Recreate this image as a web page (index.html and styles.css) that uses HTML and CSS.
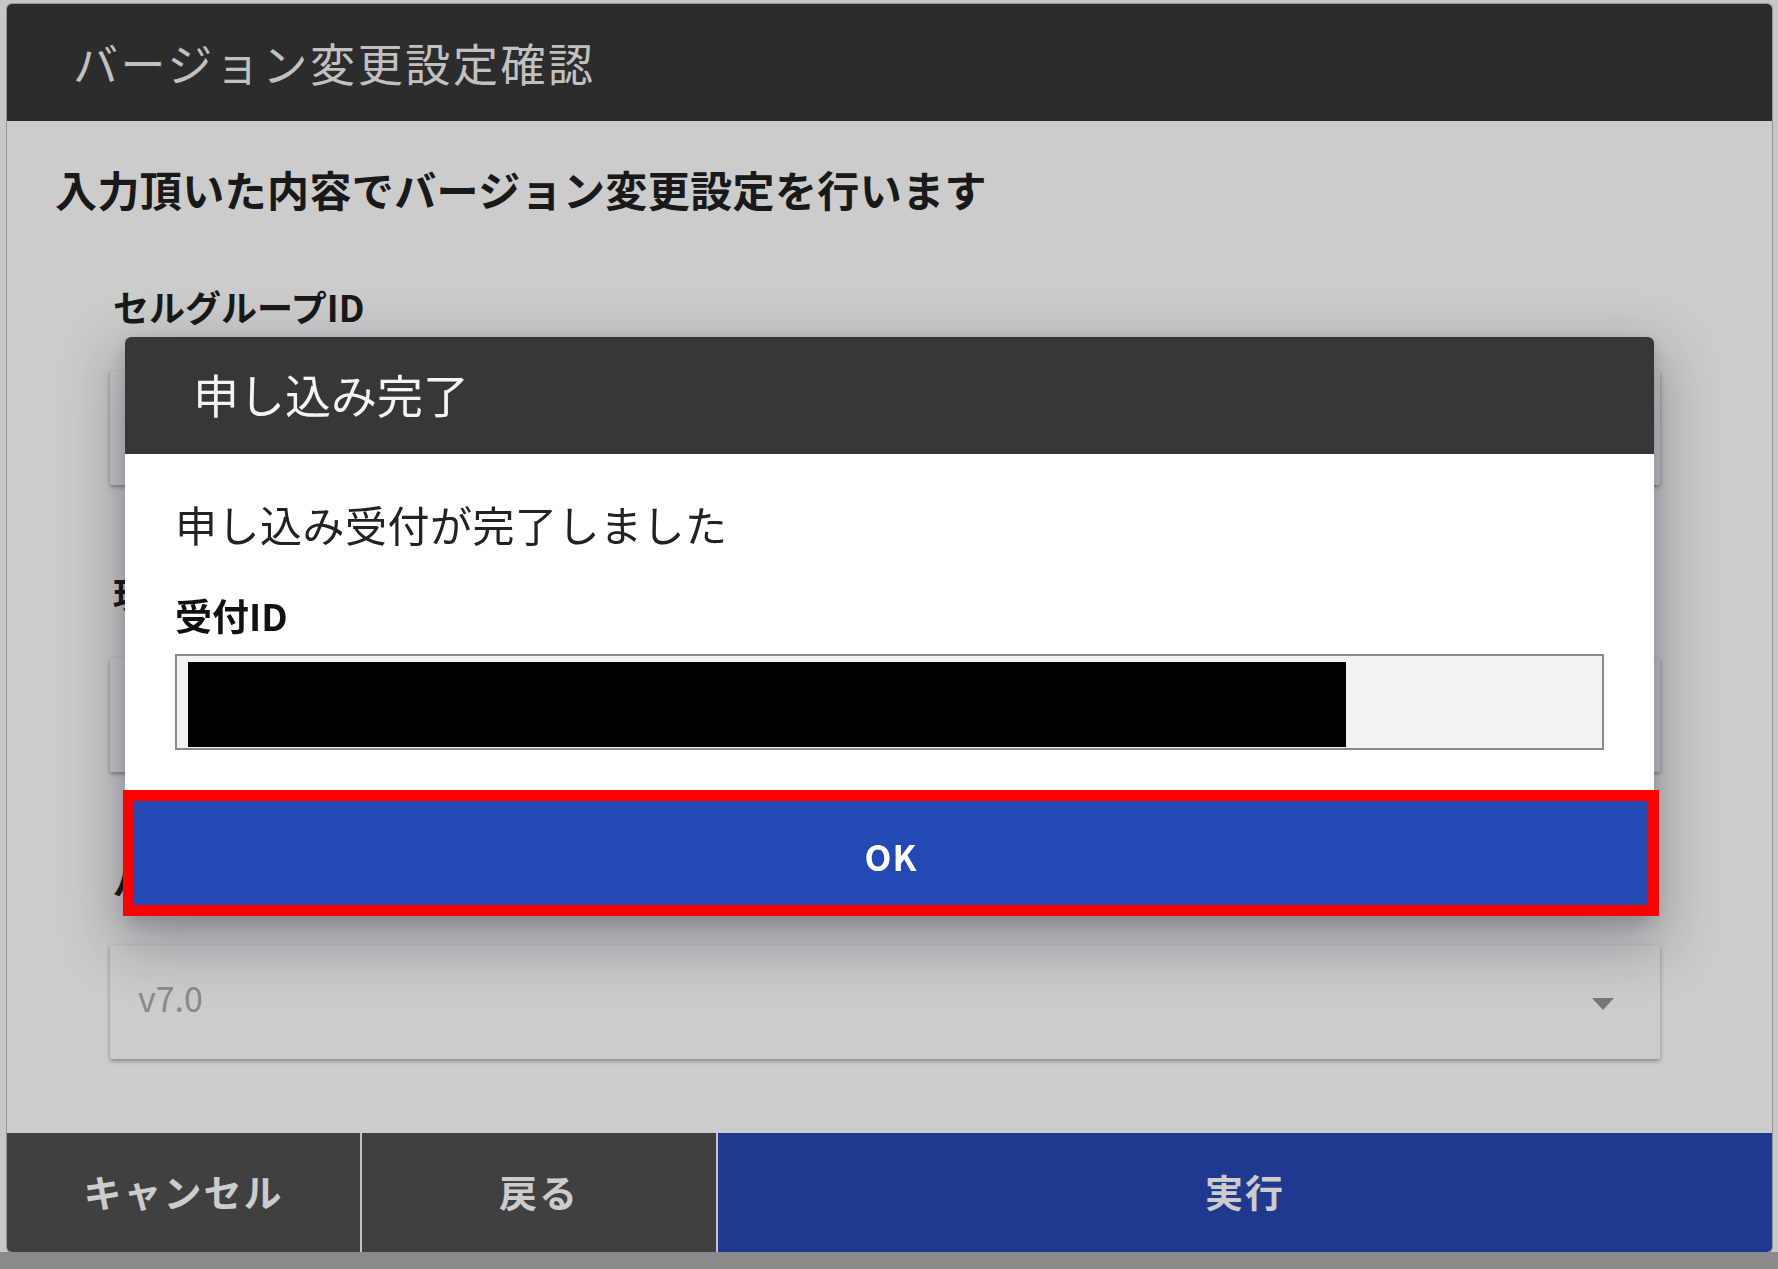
FILE: index.html
```html
<!DOCTYPE html>
<html lang="ja">
<head>
    <meta charset="UTF-8">
    <meta name="viewport" content="width=device-width, initial-scale=1.0">
    <title>バージョン変更設定確認</title>
    <link rel="stylesheet" href="styles.css">
</head>
<body>
    <div class="screen">
        <div class="dialog">
            <div class="dialog-header">バージョン変更設定確認</div>
            <div class="dialog-body">
                <p class="lead">入力頂いた内容でバージョン変更設定を行います</p>
                <div class="fields">
                    <div class="field">
                        <label>セルグループID</label>
                        <div class="field-box"></div>
                    </div>
                    <div class="field">
                        <label>現在のバージョン</label>
                        <div class="field-box"></div>
                    </div>
                    <div class="field">
                        <label>バージョン</label>
                        <div class="field-box select">
                            <span class="value">v7.0</span>
                            <span class="caret"></span>
                        </div>
                    </div>
                </div>
            </div>
            <div class="dialog-actions">
                <button class="btn btn-dark btn-cancel">キャンセル</button>
                <button class="btn btn-dark btn-back">戻る</button>
                <button class="btn btn-primary">実行</button>
            </div>
        </div>
        <div class="screen-bottom"></div>
    </div>

    <div class="backdrop"></div>

    <div class="modal">
        <div class="modal-header">申し込み完了</div>
        <div class="modal-body">
            <p class="message">申し込み受付が完了しました</p>
            <label class="id-label">受付ID</label>
            <div class="id-box"><span class="redacted"></span></div>
        </div>
        <button class="ok-button">OK</button>
    </div>
</body>
</html>
```

FILE: styles.css
```css
body {
    margin: 0;
    font-family: "Noto Sans CJK JP", "Noto Sans", sans-serif;
    background-color: #f9f9f9;
}
.screen {
    height: 1269px;
    box-sizing: border-box;
    padding: 4px 6px 0 7px;
    display: flex;
    flex-direction: column;
}
.screen-bottom {
    flex: 1;
    margin: 0 -6px 0 -7px;
    background-color: #adadad;
}
.dialog {
    height: 1248px;
    background-color: #ffffff;
    border-radius: 5px;
    box-shadow: 0 0 0 1px rgba(0, 0, 0, 0.25);
    display: flex;
    flex-direction: column;
    overflow: hidden;
}
.dialog-header {
    height: 117px;
    flex: none;
    display: flex;
    align-items: center;
    padding-left: 66px;
    background-color: #373737;
    color: #f2f2f2;
    font-size: 45px;
    letter-spacing: 2.6px;
}
.dialog-body {
    flex: 1;
    padding-left: 48px;
}
.lead {
    margin: 43px 0 0;
    font-size: 42px;
    line-height: 50px;
    font-weight: bold;
    letter-spacing: 0.4px;
    color: #202020;
}
.fields {
    width: 1550px;
    margin-left: 55px;
}
.field {
    margin-top: 88px;
}
.field:first-child {
    margin-top: 72px;
}
.field label {
    display: block;
    padding-left: 3px;
    font-size: 36px;
    line-height: 40px;
    font-weight: bold;
    color: #202020;
}
.field-box {
    height: 114px;
    margin-top: 45px;
    background-color: #ffffff;
    border-radius: 2px;
    box-shadow: 0 2px 4px rgba(0, 0, 0, 0.35);
}
.field-box.select {
    display: flex;
    align-items: center;
    justify-content: space-between;
    padding: 0 46px 0 28px;
    font-size: 34px;
    color: #adadad;
}
.select .value {
    margin-bottom: 9px;
}
.caret {
    width: 0;
    height: 0;
    border-left: 11px solid transparent;
    border-right: 11px solid transparent;
    border-top: 12px solid #959595;
    margin-top: 4px;
}
.dialog-actions {
    height: 119px;
    flex: none;
    display: flex;
}
.btn {
    padding: 0 0 4px;
    border: none;
    font-family: inherit;
    font-size: 38px;
    font-weight: bold;
    letter-spacing: 2px;
    color: #ffffff;
    cursor: pointer;
}
.btn + .btn {
    border-left: 2px solid #f4f4f4;
}
.btn-cancel {
    width: 353px;
}
.btn-back {
    width: 356px;
}
.btn-dark {
    background-color: #515151;
}
.btn-primary {
    flex: 1;
    background-color: #2747b4;
}
.backdrop {
    position: fixed;
    top: 0;
    left: 0;
    right: 0;
    bottom: 0;
    background-color: rgba(0, 0, 0, 0.2);
}
.modal {
    position: absolute;
    top: 337px;
    left: 125px;
    width: 1529px;
    background-color: #ffffff;
    border-radius: 6px 6px 0 0;
    box-shadow: 0 22px 60px 8px rgba(15, 20, 40, 0.3), 0 6px 18px rgba(0, 0, 0, 0.15);
}
.modal-header {
    height: 111px;
    padding: 0 0 6px 68px;
    display: flex;
    align-items: center;
    border-radius: 6px 6px 0 0;
    background-color: #373737;
    color: #f4f4f4;
    font-size: 46px;
}
.modal-body {
    padding: 0 50px 40px;
}
.message {
    margin: 46px 0 0;
    font-size: 42px;
    line-height: 48px;
    letter-spacing: 0.5px;
    color: #222222;
}
.id-label {
    display: block;
    margin-top: 46px;
    font-size: 37px;
    line-height: 42px;
    font-weight: bold;
    color: #111111;
}
.id-box {
    height: 96px;
    margin-top: 18px;
    box-sizing: border-box;
    padding: 6px 0 0 11px;
    border: 2px solid #8a8a8a;
    background-color: #f2f2f2;
}
.redacted {
    display: block;
    width: 1158px;
    height: 85px;
    background-color: #000000;
}
.ok-button {
    display: block;
    width: calc(100% + 7px);
    height: 126px;
    margin: 0 -5px 0 -2px;
    padding: 4px 0 0;
    box-sizing: border-box;
    border: 11px solid #ff0000;
    background-color: #2349b5;
    color: #ffffff;
    font-family: inherit;
    font-size: 35px;
    font-weight: bold;
    letter-spacing: 1px;
    cursor: pointer;
}
```
